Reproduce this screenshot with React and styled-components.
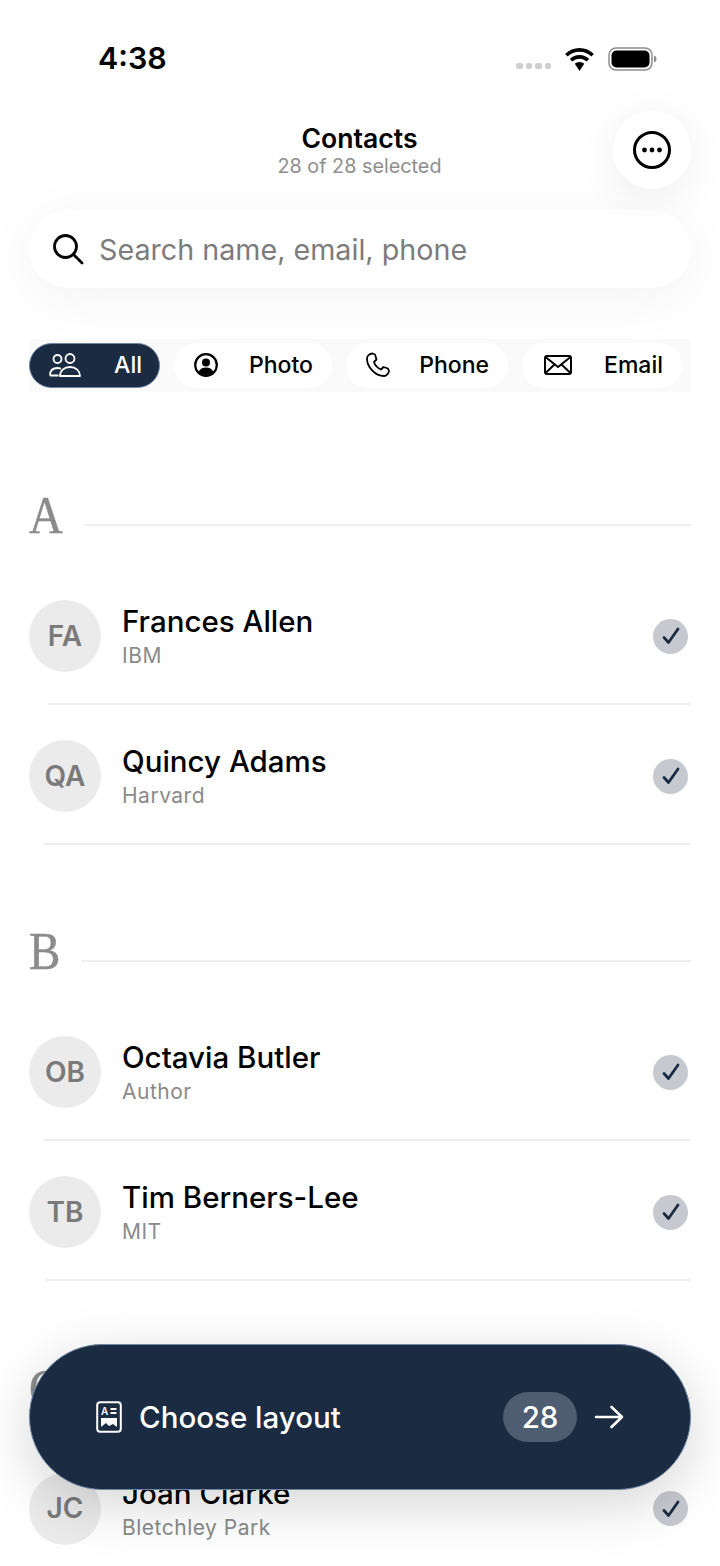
import React from "react";
import styled, { createGlobalStyle } from "styled-components";

const Global = createGlobalStyle`
  html, body { margin: 0; padding: 0; background: #fff; }
  * { box-sizing: border-box; }
  body { font-family: Inter, "Noto Sans", sans-serif; color: #000; }
`;

const Page = styled.div`
  position: relative;
  width: 720px;
  height: 1566px;
  overflow: hidden;
  background: #fff;
  padding: 0 29px;
`;

const StatusBar = styled.div`
  height: 111px;
  margin: 0 -29px;
  padding: 4px 63px 0 98px;
  display: flex;
  align-items: center;
  justify-content: space-between;
`;
const Time = styled.div`
  font-size: 30.4px;
  font-weight: 600;
`;
const StatusIcons = styled.div`
  display: flex;
  align-items: center;
  gap: 13px;
  padding-top: 2px;
`;
const Dots = styled.div`
  display: flex;
  gap: 3px;
  margin-top: 15px;
`;
const Dot = styled.span`
  width: 6.5px;
  height: 6.5px;
  border-radius: 2px;
  background: #cfcfcf;
`;

const Header = styled.div`
  display: grid;
  grid-template-columns: 78px 1fr 78px;
  height: 78px;
  align-items: center;
`;
const TitleBlock = styled.div`
  grid-column: 2;
  display: flex;
  flex-direction: column;
  align-items: center;
  padding-top: 2px;
  margin-left: -1px;
`;
const Title = styled.div`
  font-size: 26.6px;
  line-height: 30px;
  font-weight: 600;
`;
const Subtitle = styled.div`
  font-size: 19.8px;
  line-height: 26px;
  color: #8e8e8e;
`;
const MoreButton = styled.div`
  grid-column: 3;
  width: 78px;
  height: 78px;
  border-radius: 50%;
  background: #fff;
  display: flex;
  align-items: center;
  justify-content: center;
  box-shadow: 0 8px 44px rgba(0, 0, 0, 0.07);
`;

const Search = styled.div`
  margin-top: 21px;
  height: 78px;
  border-radius: 39px;
  background: #fff;
  display: flex;
  align-items: center;
  gap: 15px;
  padding-left: 23px;
  box-shadow: 0 10px 56px rgba(0, 0, 0, 0.05);
`;
const Placeholder = styled.div`
  font-size: 28.7px;
  color: #7c7c7c;
`;

const Filters = styled.div`
  margin-top: 51px;
  height: 53px;
  background: #fafafa;
  display: flex;
  padding-top: 4px;
  gap: 14px;
`;
const Chip = styled.div`
  height: 45px;
  width: ${(p) => p.$w}px;
  border-radius: 23px;
  background: ${(p) => (p.$active ? "#1a2b42" : "#fff")};
  color: ${(p) => (p.$active ? "#fff" : "#000")};
  border: ${(p) => (p.$active ? "1px solid #6f86a3" : "none")};
  display: flex;
  align-items: center;
  justify-content: space-between;
  padding: 0 ${(p) => (p.$active ? 17 : 19)}px 2px ${(p) => p.$pl}px;
  font-size: 23px;
  font-weight: 500;
`;

const Section = styled.section`
  &:first-of-type { margin-top: 98px; }
  margin-bottom: 80.4px;
`;
const SectionHead = styled.div`
  height: 50px;
  display: flex;
  align-items: center;
  gap: 21px;
  margin-bottom: 26px;
`;
const Letter = styled.div`
  font-family: "Liberation Serif", serif;
  font-size: 47px;
  line-height: 50px;
  color: #8b8b8b;
  transform: scaleY(1.14);
  -webkit-text-stroke: 0.4px #8b8b8b;
`;
const HeadLine = styled.div`
  flex: 1;
  height: 2px;
  margin-top: 20px;
  background: #efefef;
`;

const Row = styled.div`
  height: 140px;
  display: flex;
  align-items: center;
  gap: 21px;
  padding-right: 3px;
  position: relative;
`;
const Divider = styled.div`
  position: absolute;
  left: ${(p) => p.$left}px;
  right: 0;
  bottom: 1px;
  height: 2px;
  background: #efefef;
`;
const Avatar = styled.div`
  width: 72px;
  height: 72px;
  border-radius: 50%;
  background: #ebebeb;
  color: #7a7a7a;
  font-size: 28px;
  font-weight: 600;
  display: flex;
  align-items: center;
  justify-content: center;
  flex: none;
  padding-bottom: 1px;
`;
const RowText = styled.div`
  flex: 1;
  display: flex;
  flex-direction: column;
  gap: 4px;
  padding-top: 1px;
`;
const Name = styled.div`
  font-size: 29.5px;
  line-height: 34px;
  font-weight: 500;
`;
const Sub = styled.div`
  font-size: 21px;
  line-height: 28px;
  color: #8a8a8a;
  letter-spacing: 0.5px;
`;
const Check = styled.div`
  width: 35px;
  height: 35px;
  border-radius: 50%;
  background: #c6cad0;
  display: flex;
  align-items: center;
  justify-content: center;
`;

const Bar = styled.div`
  position: absolute;
  left: 29px;
  top: 1344px;
  width: 662px;
  height: 146px;
  border-radius: 73px;
  background: #1a2b42;
  border: 1.5px solid #6f86a3;
  box-shadow: 0 14px 56px rgba(0, 0, 0, 0.17);
  color: #fff;
  display: flex;
  align-items: center;
  padding: 0 66px 0 66px;
`;
const BarLabel = styled.div`
  flex: 1;
  margin-left: 17px;
  font-size: 29.5px;
  font-weight: 500;
`;
const Count = styled.div`
  width: 74px;
  height: 50px;
  border-radius: 25px;
  background: #4e5d71;
  font-size: 29.5px;
  font-weight: 500;
  display: flex;
  align-items: center;
  justify-content: center;
  margin-right: 17px;
`;

const Wifi = () => (
  <svg width="31" height="24" viewBox="2 0 26 21" fill="#000">
    <path d="M15 4.200c4 0 7.700 1.600 10.400 4.200l2.200-2.300C24.300 2.900 19.900.9 15 .9S5.700 2.900 2.400 6.100l2.200 2.300C7.300 5.800 11 4.200 15 4.200z" />
    <path d="M15 10.200c2.400 0 4.600.9 6.200 2.500l2.300-2.300c-2.200-2.100-5.200-3.500-8.500-3.500s-6.300 1.400-8.500 3.500l2.300 2.300c1.600-1.600 3.800-2.500 6.200-2.500z" />
    <path d="M15 13.100c-1.600 0-3 .6-4.100 1.600L15 21l4.100-6.300c-1.100-1-2.500-1.600-4.100-1.600z" />
  </svg>
);
const Battery = () => (
  <svg width="49" height="24" viewBox="0 0 49 24">
    <rect x="1" y="1" width="43" height="22" rx="7" fill="none" stroke="#8d8d8d" strokeWidth="1.500" />
    <rect x="3.500" y="3.500" width="38" height="17" rx="5" fill="#000" />
    <path d="M46 8.500c1.600.5 2.500 1.800 2.500 3.500s-.9 3-2.500 3.500z" fill="#8d8d8d" />
  </svg>
);
const MoreIcon = () => (
  <svg width="40" height="40" viewBox="0 0 40 40" fill="none">
    <circle cx="20" cy="20" r="17.500" stroke="#000" strokeWidth="3" />
    <circle cx="12.500" cy="20" r="2.400" fill="#000" />
    <circle cx="20" cy="20" r="2.400" fill="#000" />
    <circle cx="27.500" cy="20" r="2.400" fill="#000" />
  </svg>
);
const SearchIcon = () => (
  <svg width="32" height="32" viewBox="0 0 32 32" fill="none" stroke="#000" strokeWidth="2.800" strokeLinecap="round">
    <circle cx="13.500" cy="13.500" r="11" />
    <path d="M21.500 21.500L30 30" />
  </svg>
);
const UsersIcon = () => (
  <svg width="32" height="24" viewBox="0 0 32 24" fill="none" stroke="#fff" strokeWidth="1.800" strokeLinejoin="round">
    <circle cx="8.500" cy="6" r="4" />
    <circle cx="21" cy="5.500" r="4.500" />
    <path d="M1 22.500c0-4.500 2.500-7.500 7.500-7.500 1.500 0 2.500.3 3.500.8M1 22.500h8.500" />
    <path d="M11 23c0-5 4-9 10-9s10 4 10 9z" />
  </svg>
);
const PhotoIcon = () => (
  <svg width="24" height="24" viewBox="0 0 24 24">
    <circle cx="12" cy="12" r="10.800" fill="none" stroke="#000" strokeWidth="2.200" />
    <circle cx="12" cy="9.500" r="4" fill="#000" />
    <path d="M4.500 19c1.500-3.200 4-4.500 7.500-4.500s6 1.300 7.500 4.500c-2 2-4.700 3-7.500 3s-5.500-1-7.500-3z" fill="#000" />
  </svg>
);
const PhoneIcon = () => (
  <svg width="24" height="25" viewBox="0 0 24 25" fill="none" stroke="#000" strokeWidth="1.800" strokeLinejoin="round">
    <path d="M6.500 1.500l2.500 1 1.500 5-2.500 2.500c1 3.500 3.500 6 7 7.500l2.500-2.500 4.500 1.500 1 2.500c-.3 2.500-2.500 5-5 5C9 24 1 15 1 6.500c0-2.500 2.500-4.700 5.500-5z" />
  </svg>
);
const MailIcon = () => (
  <svg width="28" height="20" viewBox="0 0 28 20" fill="none" stroke="#000" strokeWidth="2" strokeLinejoin="round">
    <rect x="1" y="1" width="26" height="18" rx="2" />
    <path d="M1.500 2L14 12 26.500 2M1.500 18L10.500 9.500M26.500 18L17.500 9.500" />
  </svg>
);
const CheckIcon = () => (
  <svg width="20" height="20" viewBox="0 0 20 20" fill="none" stroke="#1a2b42" strokeWidth="2.800" strokeLinecap="round" strokeLinejoin="round">
    <path d="M3 11.500L7.500 16.500 17 3" />
  </svg>
);
const LayoutIcon = () => (
  <svg width="26" height="32" viewBox="0 0 26 32" fill="none">
    <rect x="1.200" y="1.200" width="23.600" height="29.600" rx="3" stroke="#fff" strokeWidth="2" />
    <text x="5" y="14" fontFamily="Inter, sans-serif" fontSize="10" fontWeight="600" fill="#fff">A</text>
    <path d="M14.500 8h6M14.500 12h6" stroke="#fff" strokeWidth="1.800" />
    <path d="M5 17h16v9l-4-3-4 2-3-3-5 4z" fill="#fff" />
  </svg>
);
const ArrowIcon = () => (
  <svg width="30" height="24" viewBox="0 0 30 24" fill="none" stroke="#fff" strokeWidth="2.600" strokeLinecap="round" strokeLinejoin="round">
    <path d="M2 12h26M17.500 2L28 12 17.500 22" />
  </svg>
);

const sections = [
  { letter: "A", rows: [
    { i: "FA", n: "Frances Allen", s: "IBM", d: 18 },
    { i: "QA", n: "Quincy Adams", s: "Harvard", d: 15 },
  ]},
  { letter: "B", rows: [
    { i: "OB", n: "Octavia Butler", s: "Author", d: 15 },
    { i: "TB", n: "Tim Berners-Lee", s: "MIT", d: 16 },
  ]},
  { letter: "C", rows: [
    { i: "JC", n: "Joan Clarke", s: "Bletchley Park", d: 16 },
  ]},
];

export default function App() {
  return (
    <Page>
      <Global />
      <StatusBar>
        <Time>4:38</Time>
        <StatusIcons>
          <Dots><Dot /><Dot /><Dot /><Dot /></Dots>
          <Wifi />
          <Battery />
        </StatusIcons>
      </StatusBar>
      <Header>
        <TitleBlock>
          <Title>Contacts</Title>
          <Subtitle>28 of 28 selected</Subtitle>
        </TitleBlock>
        <MoreButton><MoreIcon /></MoreButton>
      </Header>
      <Search>
        <SearchIcon />
        <Placeholder>Search name, email, phone</Placeholder>
      </Search>
      <Filters>
        <Chip $active $w={131} $pl={19}><UsersIcon />All</Chip>
        <Chip $w={158} $pl={20}><PhotoIcon />Photo</Chip>
        <Chip $w={162} $pl={20}><PhoneIcon />Phone</Chip>
        <Chip $w={160} $pl={22}><MailIcon />Email</Chip>
      </Filters>
      {sections.map((sec) => (
        <Section key={sec.letter}>
          <SectionHead>
            <Letter>{sec.letter}</Letter>
            <HeadLine />
          </SectionHead>
          {sec.rows.map((r) => (
            <Row key={r.i}>
              <Avatar>{r.i}</Avatar>
              <RowText>
                <Name>{r.n}</Name>
                <Sub>{r.s}</Sub>
              </RowText>
              <Check><CheckIcon /></Check>
              <Divider $left={r.d} />
            </Row>
          ))}
        </Section>
      ))}
      <Bar>
        <LayoutIcon />
        <BarLabel>Choose layout</BarLabel>
        <Count>28</Count>
        <ArrowIcon />
      </Bar>
    </Page>
  );
}
